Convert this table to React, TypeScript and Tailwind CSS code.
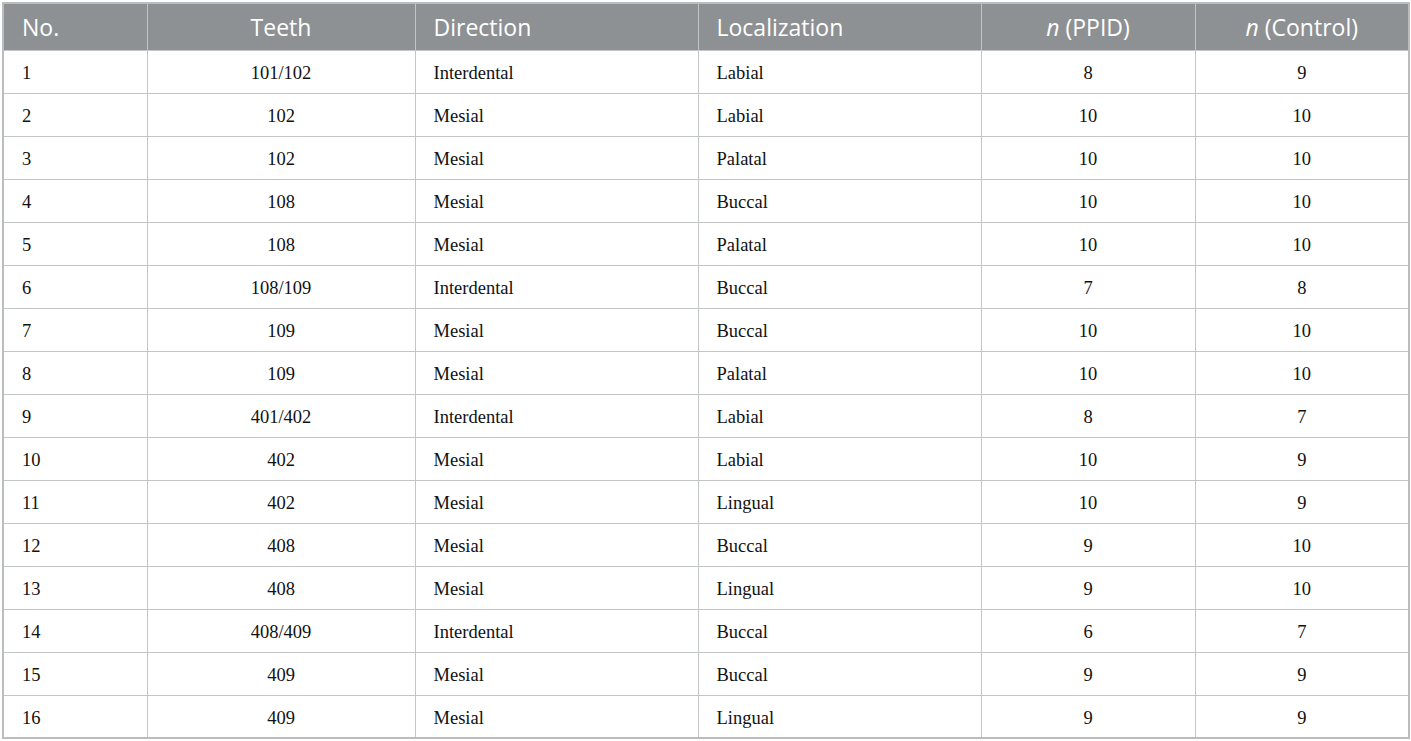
import React from 'react'

const rows: [string, string, string, string, string, string][] = [
  ['1', '101/102', 'Interdental', 'Labial', '8', '9'],
  ['2', '102', 'Mesial', 'Labial', '10', '10'],
  ['3', '102', 'Mesial', 'Palatal', '10', '10'],
  ['4', '108', 'Mesial', 'Buccal', '10', '10'],
  ['5', '108', 'Mesial', 'Palatal', '10', '10'],
  ['6', '108/109', 'Interdental', 'Buccal', '7', '8'],
  ['7', '109', 'Mesial', 'Buccal', '10', '10'],
  ['8', '109', 'Mesial', 'Palatal', '10', '10'],
  ['9', '401/402', 'Interdental', 'Labial', '8', '7'],
  ['10', '402', 'Mesial', 'Labial', '10', '9'],
  ['11', '402', 'Mesial', 'Lingual', '10', '9'],
  ['12', '408', 'Mesial', 'Buccal', '9', '10'],
  ['13', '408', 'Mesial', 'Lingual', '9', '10'],
  ['14', '408/409', 'Interdental', 'Buccal', '6', '7'],
  ['15', '409', 'Mesial', 'Buccal', '9', '9'],
  ['16', '409', 'Mesial', 'Lingual', '9', '9'],
]

const head = 'h-[47px] px-[18px] text-[23px] font-normal text-white border border-[#c3c6c6]'
const cell = 'h-[43px] px-[18px] pt-[5px] text-[18.5px] text-[#111] border border-[#c3c6c6]'

export default function App() {
  return (
    <div className="w-[1411px] h-[741px] bg-white pt-[2px] pl-[2px]">
      <table className="w-[1406px] table-fixed border-collapse border-2 border-[#b9bdbd]">
        <colgroup>
          <col className="w-[144px]" />
          <col className="w-[268px]" />
          <col className="w-[283px]" />
          <col className="w-[283px]" />
          <col className="w-[214px]" />
          <col className="w-[214px]" />
        </colgroup>
        <thead className="bg-[#8e9193] font-['Open_Sans',sans-serif]">
          <tr>
            <th className={head + ' text-left'}>No.</th>
            <th className={head + ' text-center'}>Teeth</th>
            <th className={head + ' text-left'}>Direction</th>
            <th className={head + ' text-left'}>Localization</th>
            <th className={head + ' text-center'}>
              <i>n</i> (PPID)
            </th>
            <th className={head + ' text-center'}>
              <i>n</i> (Control)
            </th>
          </tr>
        </thead>
        <tbody className="font-['Liberation_Serif',serif]">
          {rows.map((r) => (
            <tr key={r[0]}>
              <td className={cell + ' text-left'}>{r[0]}</td>
              <td className={cell + ' text-center'}>{r[1]}</td>
              <td className={cell + ' text-left'}>{r[2]}</td>
              <td className={cell + ' text-left'}>{r[3]}</td>
              <td className={cell + ' text-center'}>{r[4]}</td>
              <td className={cell + ' text-center'}>{r[5]}</td>
            </tr>
          ))}
        </tbody>
      </table>
    </div>
  )
}
